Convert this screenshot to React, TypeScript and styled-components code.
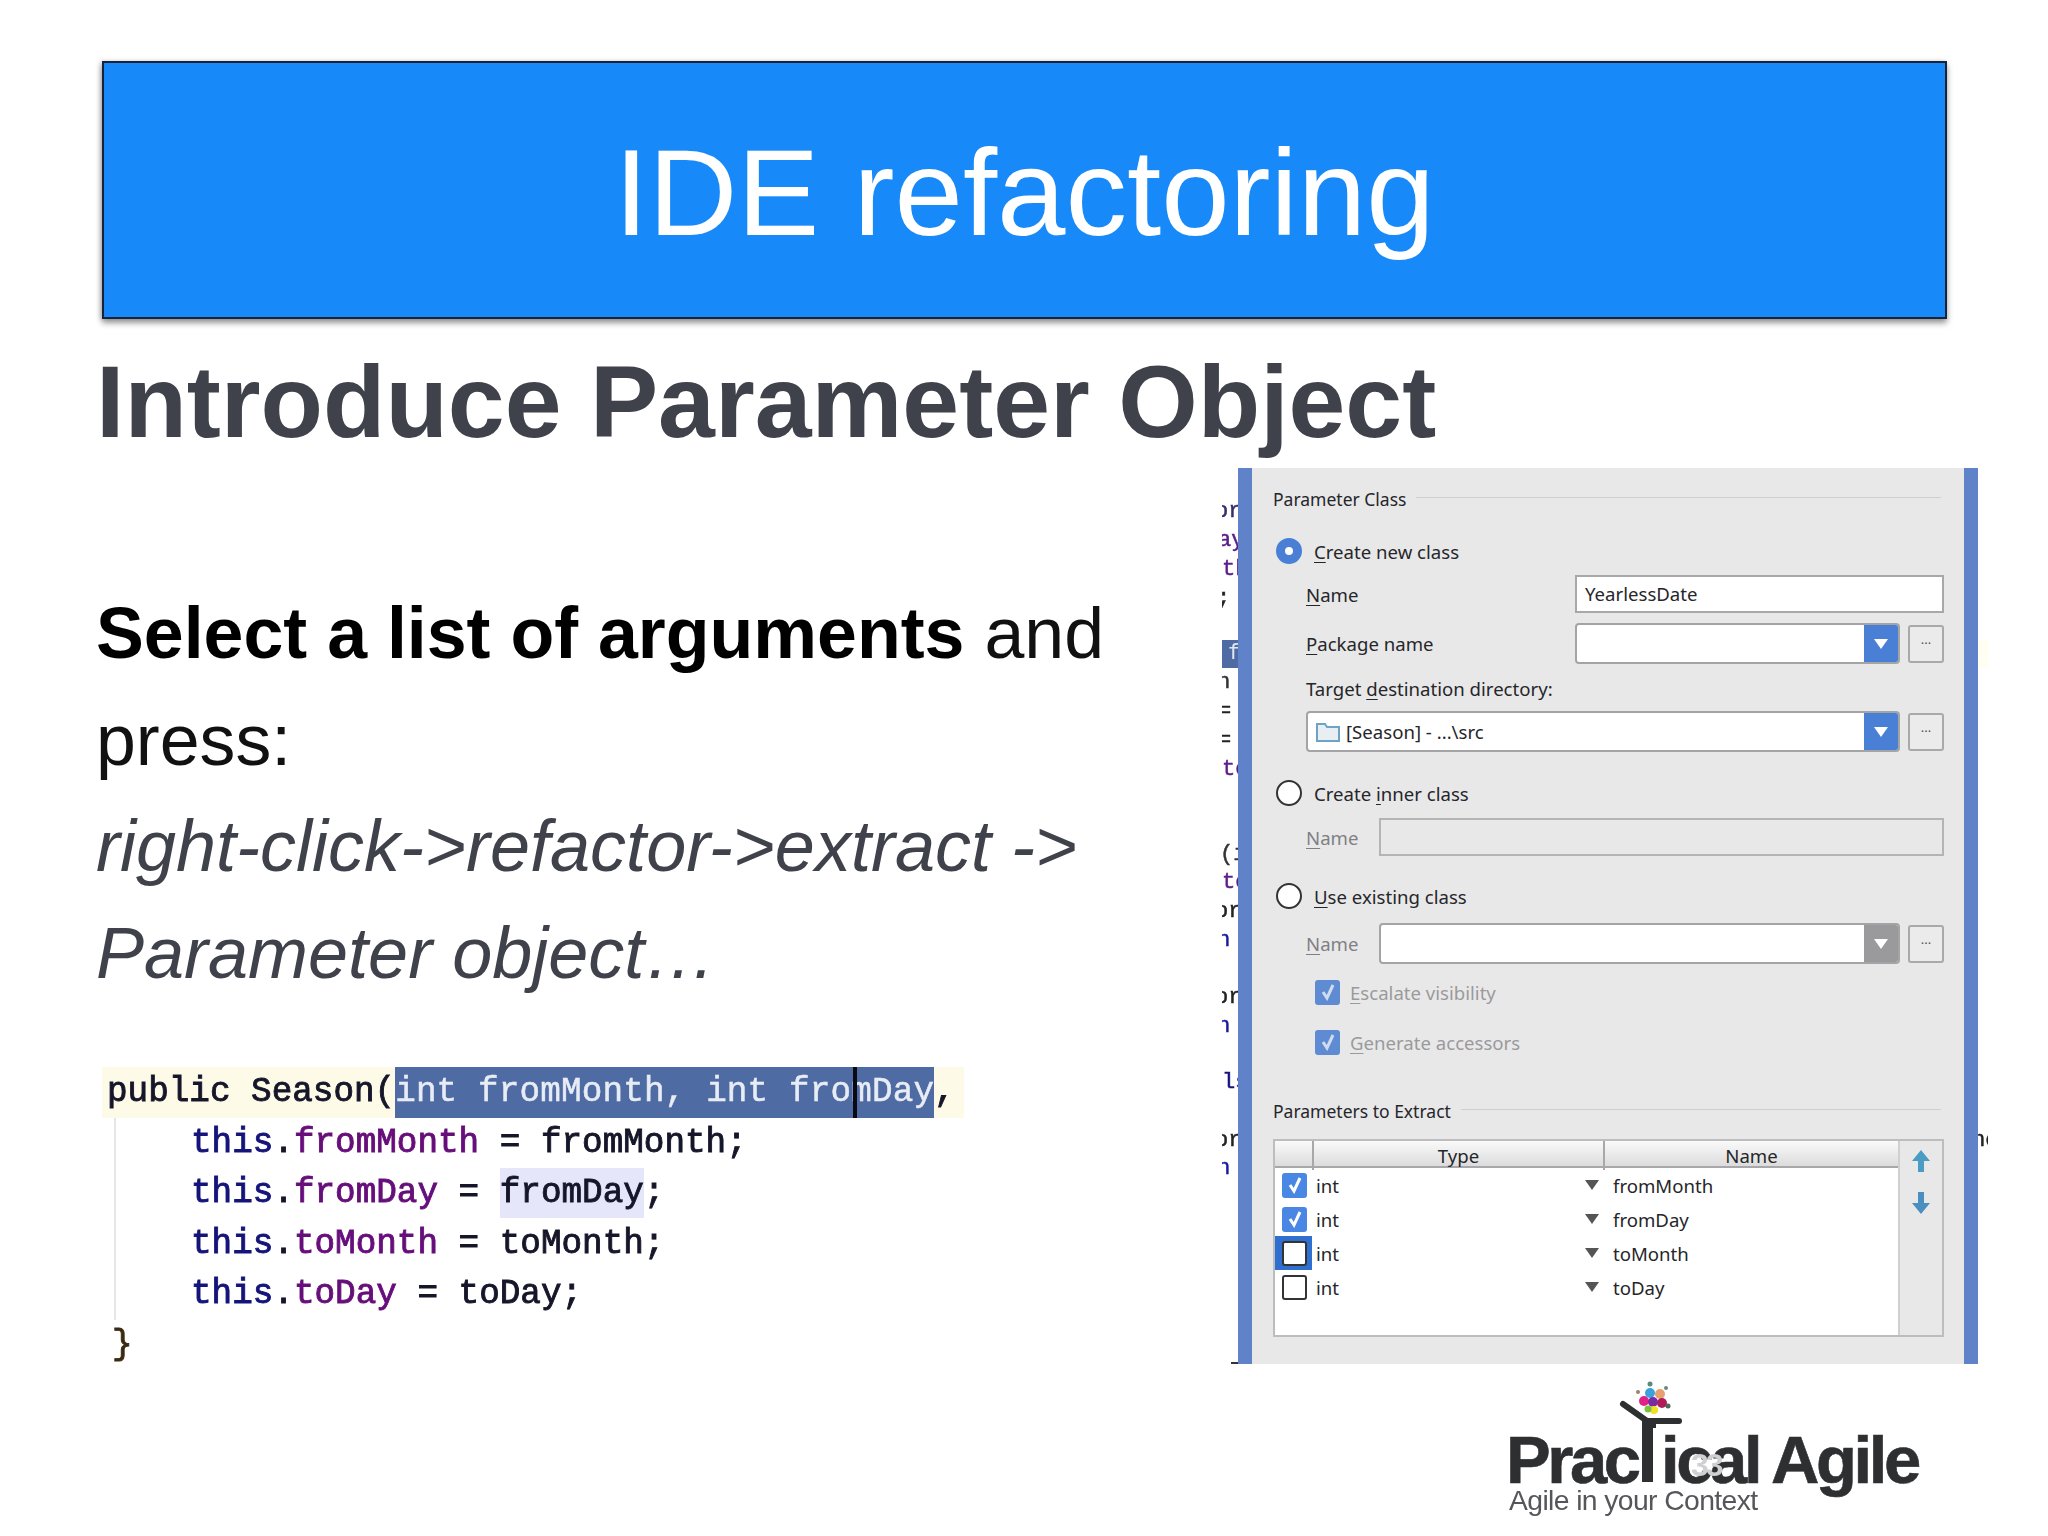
import React from "react";
import styled, { createGlobalStyle } from "styled-components";

const Global = createGlobalStyle`
  html, body { margin: 0; padding: 0; background: #fff; }
  body { font-family: "Liberation Sans", Arial, sans-serif; }
`;

const Slide = styled.div`
  width: 2048px;
  height: 1536px;
  overflow: hidden;
  box-sizing: border-box;
  padding: 61px 60px 0 96px;
  background: #fff;
`;
const Banner = styled.header`
  box-sizing: border-box;
  width: 1845px;
  height: 258px;
  margin-left: 6px;
  display: flex;
  align-items: center;
  justify-content: center;
  background: #1789f9;
  border: 2px solid #16233a;
  box-shadow: 0 4px 6px rgba(0, 0, 0, 0.4), -2px 0 5px rgba(0, 0, 0, 0.15);
`;
const BannerTitle = styled.h1`
  margin: 0;
  font-size: 123px;
  font-weight: 400;
  color: #fff;
  position: relative;
  top: 2px;
`;
const Heading = styled.h2`
  margin: 25px 0 0;
  font-size: 102.2px;
  line-height: 115px;
  font-weight: 700;
  color: #3f424b;
`;
const Columns = styled.div`
  display: flex;
  justify-content: space-between;
  align-items: flex-start;
`;
const LeftCol = styled.div`
  width: 1100px;
  padding-top: 121px;
`;
const Body = styled.p`
  margin: 0;
  font-size: 71.7px;
  line-height: 106.5px;
  color: #111;
`;
const Strong = styled.strong`
  font-weight: 700;
  color: #000;
`;
const Em = styled.em`
  font-style: italic;
  font-size: 72px;
  color: #3f424b;
`;

const Code = styled.div`
  margin: 61px 0 0 6px;
  font-family: "Liberation Mono", monospace;
  font-size: 34.3px;
  line-height: 50.4px;
  color: #16162a;
  -webkit-text-stroke: 0.9px currentColor;
  filter: blur(0.45px);
`;
const FirstLine = styled.div`
  width: 862px;
  height: 51px;
  background: #fdfbe8;
  display: flex;
  white-space: pre;
  padding-left: 5px;
  box-sizing: border-box;
`;
const Selection = styled.span`
  position: relative;
  display: inline-block;
  width: 539px;
  background: #4f6ba3;
  color: #e8ecf5;
  letter-spacing: 0.15px;
  -webkit-text-stroke: 0.5px currentColor;
`;
const Caret = styled.i`
  position: absolute;
  left: 458px;
  top: 0;
  width: 4px;
  height: 100%;
  background: #0a0a14;
`;
const Body2 = styled.div`
  margin-left: 12px;
  border-left: 2px solid #e6e6e6;
  padding-left: 75px;
  width: fit-content;
`;
const CodeLine = styled.div`
  white-space: pre;
`;
const This = styled.span`
  color: #14147a;
`;
const Field = styled.span`
  color: #660e7a;
`;
const Mark = styled.span`
  background: #e6e6fa;
  display: inline-block;
  height: 50px;
`;
const Close = styled.div`
  padding-left: 10px;
  color: #3a2a10;
`;

const RightCol = styled.div`
  width: 766px;
  padding-top: 9px;
  display: flex;
  flex-direction: column;
  align-items: flex-end;
`;
const Shot = styled.div`
  width: 766px;
  display: flex;
  height: 896px;
`;
const Clipped = styled.div<{ $w: number }>`
  width: ${(p) => p.$w}px;
  flex: none;
  overflow: hidden;
  position: relative;
  font-family: "Liberation Mono", monospace;
  font-size: 22px;
  filter: blur(0.4px);
`;
const Frag = styled.div<{ $y: number; $c: string; $x?: number }>`
  position: absolute;
  left: ${(p) => p.$x ?? 0}px;
  top: ${(p) => p.$y}px;
  color: ${(p) => p.$c};
  line-height: 28px;
  white-space: pre;
  -webkit-text-stroke: 0.5px currentColor;
`;
const FragBar = styled.div<{ $y: number; $bg: string; $c: string }>`
  position: absolute;
  left: 0;
  right: 0;
  top: ${(p) => p.$y}px;
  height: 28px;
  line-height: 28px;
  padding-left: 6px;
  background: ${(p) => p.$bg};
  color: ${(p) => p.$c};
`;
const Tick = styled.i`
  position: absolute;
  left: 9px;
  right: 0;
  bottom: 0;
  height: 2px;
  background: #333;
`;
const Dialog = styled.div`
  width: 740px;
  flex: none;
  box-sizing: border-box;
  border-left: 14px solid #5f82c9;
  border-right: 14px solid #5f82c9;
  background: #e8e8e9;
  padding: 17px 20px 0 21px;
  font-family: "Noto Sans", sans-serif;
  font-size: 18.6px;
  color: #26262a;
  display: flex;
  flex-direction: column;
`;
const Legend = styled.div<{ $mt?: number }>`
  display: flex;
  align-items: center;
  gap: 10px;
  height: 28px;
  margin-top: ${(p) => p.$mt || 0}px;
  font-size: 17.5px;
  white-space: nowrap;
  padding-right: 3px;
  &::after {
    content: "";
    flex: 1;
    height: 1px;
    background: #cfcfd1;
    position: relative;
    top: -2px;
  }
`;
const RadioRow = styled.div<{ $mt: number }>`
  display: flex;
  align-items: center;
  gap: 12px;
  margin-top: ${(p) => p.$mt}px;
  height: 28px;
  padding-left: 3px;
`;
const Radio = styled.span<{ $on?: boolean }>`
  width: 26px;
  height: 26px;
  flex: none;
  border-radius: 50%;
  box-sizing: border-box;
  background: #fff;
  border: ${(p) => (p.$on ? "9px solid #4a7fd6" : "2px solid #333")};
`;
const U = styled.u`
  text-underline-offset: 3px;
`;
const Row = styled.div<{ $mt: number }>`
  display: flex;
  align-items: center;
  margin-top: ${(p) => p.$mt}px;
  padding-left: 33px;
  gap: 8px;
`;
const Label = styled.span<{ $w: number; $dim?: boolean }>`
  width: ${(p) => p.$w}px;
  flex: none;
  color: ${(p) => (p.$dim ? "#808084" : "inherit")};
`;
const Input = styled.div<{ $dim?: boolean }>`
  flex: 1;
  height: 38px;
  box-sizing: border-box;
  border: 2px solid ${(p) => (p.$dim ? "#b4b4b6" : "#a8a8aa")};
  background: ${(p) => (p.$dim ? "#e8e8e9" : "#fff")};
  padding: 0 8px;
  line-height: 33px;
`;
const Combo = styled.div`
  flex: 1;
  height: 41px;
  box-sizing: border-box;
  border: 2px solid #a4a4a6;
  border-radius: 4px;
  background: #fff;
  display: flex;
  align-items: center;
  padding-left: 8px;
  gap: 6px;
  position: relative;
  overflow: hidden;
`;
const ComboArrow = styled.span<{ $grey?: boolean }>`
  position: absolute;
  right: 0;
  top: -2px;
  bottom: -2px;
  width: 34px;
  background: ${(p) => (p.$grey ? "#9a9a9c" : "#4a7fd6")};
  display: flex;
  align-items: center;
  justify-content: center;
`;
const Dots = styled.button`
  width: 36px;
  height: 38px;
  flex: none;
  padding: 0 0 8px;
  border: 2px solid #a9a9ab;
  border-radius: 3px;
  background: #ebebec;
  color: #555;
  font: inherit;
  font-size: 13px;
  line-height: 1;
`;
const CheckRow = styled.div<{ $mt: number }>`
  display: flex;
  align-items: center;
  gap: 10px;
  margin-top: ${(p) => p.$mt}px;
  padding-left: 42px;
  height: 26px;
  color: #9a9a9c;
`;
const Box = styled.span<{ $on?: boolean; $dim?: boolean }>`
  width: 25px;
  height: 25px;
  flex: none;
  box-sizing: border-box;
  border-radius: 3px;
  border: ${(p) => (p.$on ? "none" : "2px solid #333")};
  background: ${(p) => (p.$on ? (p.$dim ? "#5f8bd2" : "#4a86e4") : "#fff")};
  display: flex;
  align-items: center;
  justify-content: center;
`;
const TableWrap = styled.div`
  margin-top: 14px;
  height: 198px;
  box-sizing: border-box;
  border: 2px solid #bdbdbf;
  display: flex;
`;
const Table = styled.div`
  flex: 1;
  background: #fff;
  border-right: 2px solid #d0d0d2;
`;
const THead = styled.div`
  display: grid;
  grid-template-columns: 39px 291px 1fr;
  height: 25px;
  background: linear-gradient(#fafafa, #dcdcdc);
  border-bottom: 2px solid #a8a8aa;
`;
const Th = styled.div<{ $line?: boolean }>`
  text-align: center;
  line-height: 29px;
  border-right: ${(p) => (p.$line ? "2px solid #a8a8aa" : "none")};
`;
const TRow = styled.div`
  display: grid;
  grid-template-columns: 37px 273px 24px 1fr;
  height: 34px;
  align-items: center;
`;
const CheckCell = styled.div<{ $sel?: boolean }>`
  height: 34px;
  display: flex;
  align-items: center;
  padding-left: 7px;
  background: ${(p) => (p.$sel ? "#2f6fd0" : "transparent")};
`;
const Cell = styled.span`
  padding-left: 4px;
`;
const Side = styled.div`
  width: 42px;
  display: flex;
  flex-direction: column;
  align-items: center;
  padding-top: 8px;
  gap: 18px;
`;

const Logo = styled.div`
  position: relative;
  align-self: flex-end;
  width: 480px;
  height: 170px;
  font-family: "Liberation Sans", sans-serif;
  color: #2e2f31;
  filter: blur(0.5px);
`;
const LogoMain = styled.div`
  position: absolute;
  left: -2px;
  top: 56px;
  display: flex;
  font-size: 67px;
  font-weight: 700;
  letter-spacing: -3.4px;
  line-height: 80px;
  white-space: pre;
  -webkit-text-stroke: 0.6px #2e2f31;
`;
const LogoWord = styled.span<{ $w: number }>`
  width: ${(p) => p.$w}px;
`;
const LogoSub = styled.div`
  position: absolute;
  left: 1px;
  top: 119px;
  font-size: 28.3px;
  line-height: 34px;
  letter-spacing: -0.6px;
  color: #55565a;
  white-space: nowrap;
`;
const PageNo = styled.div`
  position: absolute;
  left: 183px;
  top: 83px;
  font-size: 32px;
  line-height: 36px;
  font-weight: 700;
  letter-spacing: -3px;
  color: #d0d0d2;
  white-space: nowrap;
`;
const LogoMark = styled.svg`
  position: absolute;
  left: 0;
  top: 0;
`;

const Tri = () => (
  <svg width="14" height="10" viewBox="0 0 14 10">
    <path d="M0 0h14L7 10z" fill="#555" />
  </svg>
);
const DownWhite = () => (
  <svg width="14" height="12" viewBox="0 0 14 12">
    <path d="M0 1h14L7 11z" fill="#fff" />
  </svg>
);
const Check = ({ dim }: { dim?: boolean }) => (
  <svg width="18" height="18" viewBox="0 0 18 18">
    <path d="M4 9l4 6 6-13" fill="none" stroke={dim ? "#cfdcf0" : "#fff"} strokeWidth="3" />
  </svg>
);
const Folder = () => (
  <svg width="24" height="20" viewBox="0 0 24 20">
    <path d="M1 2h8l2 3h12v14H1z" fill="#e9eef2" stroke="#6fa3c4" strokeWidth="2" />
  </svg>
);
const Arrow = ({ up }: { up?: boolean }) => (
  <svg width="20" height="24" viewBox="0 0 20 24">
    <path d={up ? "M10 1l9 11h-6v11H7V12H1z" : "M10 23L1 12h6V1h6v11h6z"} fill={up ? "#4a9cc4" : "#4a8fc0"} />
  </svg>
);

const params = [
  { name: "fromMonth", on: true },
  { name: "fromDay", on: true },
  { name: "toMonth", on: false, sel: true },
  { name: "toDay", on: false },
];

const frags: { y: number; c: string; t: string; x?: number }[] = [
  { y: 30, c: "#3a2a6a", t: "or", x: -7 },
  { y: 59, c: "#5b1f8a", t: "ay", x: -4 },
  { y: 88, c: "#5b1f8a", t: "th", x: 0 },
  { y: 117, c: "#222", t: ";", x: -5 },
  { y: 201, c: "#333", t: "n", x: -5 },
  { y: 230, c: "#222", t: "=", x: -4 },
  { y: 259, c: "#222", t: "=", x: -4 },
  { y: 288, c: "#5b1f8a", t: "to", x: 0 },
  { y: 373, c: "#333", t: "(i", x: -2 },
  { y: 401, c: "#5b1f8a", t: "to", x: 0 },
  { y: 430, c: "#222", t: "or", x: -7 },
  { y: 459, c: "#1a1aa0", t: "n", x: -5 },
  { y: 516, c: "#222", t: "or", x: -7 },
  { y: 545, c: "#1a1aa0", t: "n", x: -5 },
  { y: 601, c: "#14147a", t: "ls", x: 0 },
  { y: 659, c: "#222", t: "or", x: -7 },
  { y: 687, c: "#1a1aa0", t: "n", x: -5 },
];

export default function App() {
  return (
    <Slide>
      <Global />
      <Banner>
        <BannerTitle>IDE refactoring</BannerTitle>
      </Banner>
      <Heading>Introduce Parameter Object</Heading>
      <Columns>
        <LeftCol>
          <Body>
            <Strong>Select a list of arguments</Strong> and
            <br />
            press:
            <br />
            <Em>right-click-&gt;refactor-&gt;extract -&gt;</Em>
            <br />
            <Em>Parameter object…</Em>
          </Body>
          <Code>
            <FirstLine>
              <span>public Season(</span>
              <Selection>
                int fromMonth, int fromDay
                <Caret />
              </Selection>
              <span>,</span>
            </FirstLine>
            <Body2>
              <CodeLine>
                <This>this</This>.<Field>fromMonth</Field> = fromMonth;
              </CodeLine>
              <CodeLine>
                <This>this</This>.<Field>fromDay</Field> = <Mark>fromDay</Mark>;
              </CodeLine>
              <CodeLine>
                <This>this</This>.<Field>toMonth</Field> = toMonth;
              </CodeLine>
              <CodeLine>
                <This>this</This>.<Field>toDay</Field> = toDay;
              </CodeLine>
            </Body2>
            <Close>{"}"}</Close>
          </Code>
        </LeftCol>
        <RightCol>
          <Shot>
            <Clipped $w={16}>
              {frags.map((f) => (
                <Frag key={f.y} $y={f.y} $c={f.c} $x={f.x}>
                  {f.t}
                </Frag>
              ))}
              <FragBar $y={172} $bg="#4f6ba3" $c="#dfe6f3">
                f
              </FragBar>
              <Tick />
            </Clipped>
            <Dialog>
              <Legend>Parameter Class</Legend>
              <RadioRow $mt={24}>
                <Radio $on />
                <span>
                  <U>C</U>reate new class
                </span>
              </RadioRow>
              <Row $mt={10}>
                <Label $w={261}>
                  <U>N</U>ame
                </Label>
                <Input>YearlessDate</Input>
              </Row>
              <Row $mt={10}>
                <Label $w={261}>
                  <U>P</U>ackage name
                </Label>
                <Combo>
                  <ComboArrow>
                    <DownWhite />
                  </ComboArrow>
                </Combo>
                <Dots>...</Dots>
              </Row>
              <Row $mt={12}>
                <span>
                  Target <U>d</U>estination directory:
                </span>
              </Row>
              <Row $mt={10}>
                <Combo>
                  <Folder />
                  <span>[Season] - ...\src</span>
                  <ComboArrow>
                    <DownWhite />
                  </ComboArrow>
                </Combo>
                <Dots>...</Dots>
              </Row>
              <RadioRow $mt={27}>
                <Radio />
                <span>
                  Create <U>i</U>nner class
                </span>
              </RadioRow>
              <Row $mt={11}>
                <Label $w={65} $dim>
                  <U>N</U>ame
                </Label>
                <Input $dim />
              </Row>
              <RadioRow $mt={26}>
                <Radio />
                <span>
                  <U>U</U>se existing class
                </span>
              </RadioRow>
              <Row $mt={13}>
                <Label $w={65} $dim>
                  <U>N</U>ame
                </Label>
                <Combo>
                  <ComboArrow $grey>
                    <DownWhite />
                  </ComboArrow>
                </Combo>
                <Dots>...</Dots>
              </Row>
              <CheckRow $mt={15}>
                <Box $on $dim>
                  <Check dim />
                </Box>
                <span>
                  <U>E</U>scalate visibility
                </span>
              </CheckRow>
              <CheckRow $mt={24}>
                <Box $on $dim>
                  <Check dim />
                </Box>
                <span>
                  <U>G</U>enerate accessors
                </span>
              </CheckRow>
              <Legend $mt={42}>Parameters to Extract</Legend>
              <TableWrap>
                <Table>
                  <THead>
                    <Th $line />
                    <Th $line>Type</Th>
                    <Th>Name</Th>
                  </THead>
                  {params.map((p) => (
                    <TRow key={p.name}>
                      <CheckCell $sel={p.sel}>
                        <Box $on={p.on}>{p.on && <Check />}</Box>
                      </CheckCell>
                      <Cell>int</Cell>
                      <Tri />
                      <Cell>{p.name}</Cell>
                    </TRow>
                  ))}
                </Table>
                <Side>
                  <Arrow up />
                  <Arrow />
                </Side>
              </TableWrap>
            </Dialog>
            <Clipped $w={10}>
              <FragBar $y={172} $bg="#fffef0" $c="#fffef0" />
              <Frag $y={659} $c="#222" $x={-6}>
                nc
              </Frag>
            </Clipped>
          </Shot>
          <Logo>
            <LogoMain>
              <LogoWord $w={155}>Prac</LogoWord>
              <LogoWord $w={110}>ical</LogoWord>
              <span>Agile</span>
            </LogoMain>
            <LogoSub>Agile in your Context</LogoSub>
            <LogoMark width="220" height="120" viewBox="0 0 220 120">
              <path d="M115 40l24 17h32" fill="none" stroke="#2e2f31" strokeWidth="6" strokeLinecap="round" />
              <path d="M134 56h14v8h-3v54h-11z" fill="#2e2f31" />
              <circle cx="136" cy="37" r="5" fill="#e0218a" />
              <circle cx="142" cy="29" r="5" fill="#3aa0e0" />
              <circle cx="152" cy="30" r="5" fill="#e8a070" />
              <circle cx="154" cy="39" r="5" fill="#b01c5a" />
              <circle cx="145" cy="38" r="5" fill="#7c2aa0" />
              <circle cx="146" cy="46" r="4" fill="#f0e020" />
              <circle cx="140" cy="45" r="3.5" fill="#7ac142" />
              <circle cx="142" cy="20" r="2.5" fill="#5a8a7a" />
              <circle cx="130" cy="28" r="2" fill="#9a8070" />
              <circle cx="160" cy="42" r="2.5" fill="#4a6a5a" />
              <circle cx="158" cy="24" r="2" fill="#6a8a8a" />
            </LogoMark>
            <PageNo>33</PageNo>
          </Logo>
        </RightCol>
      </Columns>
    </Slide>
  );
}
